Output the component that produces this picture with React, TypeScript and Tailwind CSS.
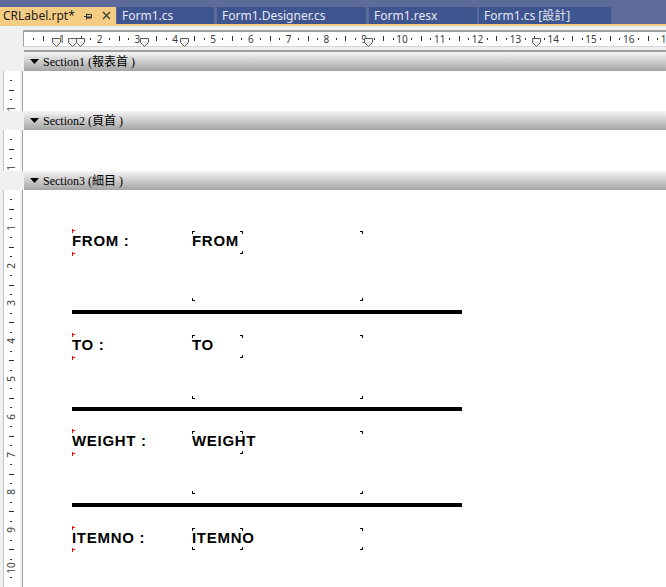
import React from "react";

const CM = 37.8;

const tabs = [
  { name: "Form1.cs", cls: "w-[97px] ml-px" },
  { name: "Form1.Designer.cs", cls: "w-[149px] ml-[3px]" },
  { name: "Form1.resx", cls: "w-[108px] ml-[3px]" },
  { name: "Form1.cs [設計]", cls: "w-[132px] ml-[2px]" },
];

const guides = [32.7, 48, 56.3, 120, 160.3, 344, 512.3];

const blocks = [
  { label: "FROM", t: 231, sb: 253, b: 300 },
  { label: "TO", t: 335, sb: 357, b: 398 },
  { label: "WEIGHT", t: 431, sb: 453, b: 493 },
  { label: "ITEMNO", t: 528, sb: 549, b: 549 },
];

const rules = [310, 407, 503];

// canvas origin of the detail section (page coords)
const OX = 23;
const OY = 190;

function TabBar() {
  return (
    <div className="font-['Noto_Sans','Noto_Sans_CJK_TC',sans-serif] text-[12px]">
      <div className="h-[24px] bg-[#5d6b9b] flex items-end">
        <div className="w-[116px] h-[17px] bg-[#f5cc84] flex items-center pl-[3px] text-[#1e1e1e]">
          <span className="leading-none">CRLabel.rpt*</span>
          <svg width="8" height="7" viewBox="0 0 8 7" className="ml-[9px] mt-px">
            <path d="M0 3.5H2.5M2.5 0.5V6.5M2.5 1.5H7.5V4.5H2.5" stroke="#333" strokeWidth="1" fill="none" />
            <path d="M2.5 4.5H7.5" stroke="#333" strokeWidth="2" />
          </svg>
          <svg width="9" height="9" viewBox="0 0 9 9" className="ml-[10px]">
            <path d="M1 1L8 8M8 1L1 8" stroke="#3a3a3a" strokeWidth="1.3" />
          </svg>
        </div>
        {tabs.map((t) => (
          <div key={t.name} className={`${t.cls} h-[17px] bg-[#3f5590] flex items-center pl-[5px] text-[#e4e8f4]`}>
            <span className="leading-none">{t.name}</span>
          </div>
        ))}
      </div>
      <div className="h-[2px] bg-[#f5cc84]" />
    </div>
  );
}

function TopRuler() {
  const marks = [];
  for (let i = 1; i <= 68; i++) {
    const x = (i * CM) / 4;
    if (i % 4 === 0) {
      marks.push(
        <span
          key={i}
          className="absolute top-px -translate-x-1/2 text-[10px] leading-[12px] text-[#3a3a3a] font-['Noto_Sans',sans-serif]"
          style={{ left: x }}
        >
          {i / 4}
        </span>
      );
    } else if (i % 4 === 2) {
      marks.push(<span key={i} className="absolute top-[4px] w-px h-[5px] bg-[#303030]" style={{ left: Math.round(x) }} />);
    } else {
      marks.push(<span key={i} className="absolute top-[6px] w-px h-[2px] bg-[#303030]" style={{ left: Math.round(x) }} />);
    }
  }
  return (
    <div className="h-[24px] pt-[4px] pl-[23px]">
      <div className="h-[17px] border-t-2 border-l border-b border-t-[#a0a0a0] border-l-[#a0a0a0] border-b-[#d4d4d4] bg-white relative">
        {marks}
        {guides.map((g) => (
          <svg key={g} width="9" height="9" viewBox="0 0 9 9" className="absolute top-[6px]" style={{ left: g - 4.5 }}>
            <polygon points="0.5,0.5 8.5,0.5 8.5,4.5 4.5,8.5 0.5,4.5" fill="#f2f2f2" stroke="#5a5a5a" />
          </svg>
        ))}
      </div>
    </div>
  );
}

function SideRuler({ h, cls }: { h: number; cls: string }) {
  const marks = [];
  for (let i = 1; (i * CM) / 4 < h + 4; i++) {
    const y = (i * CM) / 4;
    if (i % 4 === 0) {
      marks.push(
        <span
          key={i}
          className="absolute left-[7px] -translate-x-1/2 -translate-y-1/2 -rotate-90 text-[10px] leading-[10px] text-[#3a3a3a] font-['Noto_Sans',sans-serif]"
          style={{ top: y }}
        >
          {i / 4}
        </span>
      );
    } else if (i % 4 === 2) {
      marks.push(<span key={i} className="absolute left-[5px] w-[5px] h-px bg-[#303030]" style={{ top: Math.round(y) }} />);
    } else {
      marks.push(<span key={i} className="absolute left-[6px] w-[2px] h-px bg-[#303030]" style={{ top: Math.round(y) }} />);
    }
  }
  return (
    <div className={`w-[23px] shrink-0 flex bg-[#f0f0f0] ${cls}`}>
      <div className="ml-[3px] w-[17px] border-l border-[#c4c4c4] bg-white relative overflow-hidden">{marks}</div>
      <div className="ml-[2px] w-px bg-[#a0a0a0]" />
    </div>
  );
}

function SectionHeader({ title, cls }: { title: string; cls: string }) {
  return (
    <div className={`flex ${cls}`}>
      <div className="w-[24px] shrink-0 bg-[#f0f0f0]" />
      <div className="flex-1 h-[19px] bg-linear-to-b from-[#f6f6f6] to-[#a4a4a4] flex items-center pl-[6px]">
        <svg width="9" height="5" viewBox="0 0 9 5">
          <polygon points="0,0 9,0 4.5,5" fill="#000" />
        </svg>
        <span className="ml-[4px] text-[12px] leading-none text-black font-['Liberation_Serif','Noto_Sans_CJK_TC',serif]">
          {title}
        </span>
      </div>
    </div>
  );
}

function Corner({ x, y, kind }: { x: number; y: number; kind: "tl" | "tr" | "bl" | "br" }) {
  const cls = {
    tl: "border-t border-l",
    tr: "border-t border-r",
    bl: "border-b border-l",
    br: "border-b border-r",
  }[kind];
  const left = kind === "tr" || kind === "br" ? x - 2 : x;
  const top = kind === "bl" || kind === "br" ? y - 2 : y;
  return <div className={`absolute w-[3px] h-[3px] border-black ${cls}`} style={{ left: left - OX, top: top - OY }} />;
}

function RedMark({ x, y }: { x: number; y: number }) {
  return (
    <div className="absolute w-[3px] h-[4px]" style={{ left: x - OX, top: y - OY }}>
      <div className="absolute left-0 top-0 w-px h-[4px] bg-[#ff0000]" />
      <div className="absolute left-px top-px w-[2px] h-px bg-[#ff0000]" />
    </div>
  );
}

function DetailCanvas() {
  const text = "absolute font-['Liberation_Sans',Arial,sans-serif] font-bold text-[15px] leading-[15px] tracking-[0.7px] text-black whitespace-pre";
  return (
    <div className="flex-1 bg-white relative overflow-hidden">
      {blocks.map((b) => (
        <React.Fragment key={b.label}>
          <RedMark x={72} y={b.t - 2} />
          <RedMark x={72} y={b.sb - 1} />
          <span className={text} style={{ left: 72 - OX, top: b.t + 2 - OY }}>
            {b.label} :
          </span>
          <span className={text} style={{ left: 192 - OX, top: b.t + 2 - OY }}>
            {b.label}
          </span>
          <Corner x={192} y={b.t} kind="tl" />
          <Corner x={242} y={b.t} kind="tr" />
          <Corner x={242} y={b.sb} kind="br" />
          <Corner x={362} y={b.t} kind="tr" />
          <Corner x={192} y={b.b} kind="bl" />
          <Corner x={362} y={b.b} kind="br" />
        </React.Fragment>
      ))}
      {rules.map((r) => (
        <div key={r} className="absolute h-[4px] w-[390px] bg-black" style={{ left: 72 - OX, top: r - OY }} />
      ))}
    </div>
  );
}

export default function App() {
  return (
    <div className="w-[666px] h-[587px] bg-[#f0f0f0] overflow-hidden flex flex-col">
      <TabBar />
      <TopRuler />
      <div className="border-t-2 border-[#a0a0a0] ml-[24px]" />
      <SectionHeader title="Section1 (報表首 )" cls="" />
      <div className="flex h-[40px]">
        <SideRuler h={40} cls="h-[40px]" />
        <div className="flex-1 bg-white" />
      </div>
      <SectionHeader title="Section2 (頁首 )" cls="" />
      <div className="flex h-[41px]">
        <SideRuler h={41} cls="h-[41px]" />
        <div className="flex-1 bg-white" />
      </div>
      <SectionHeader title="Section3 (細目 )" cls="" />
      <div className="flex h-[397px]">
        <SideRuler h={397} cls="h-[397px]" />
        <DetailCanvas />
      </div>
    </div>
  );
}
